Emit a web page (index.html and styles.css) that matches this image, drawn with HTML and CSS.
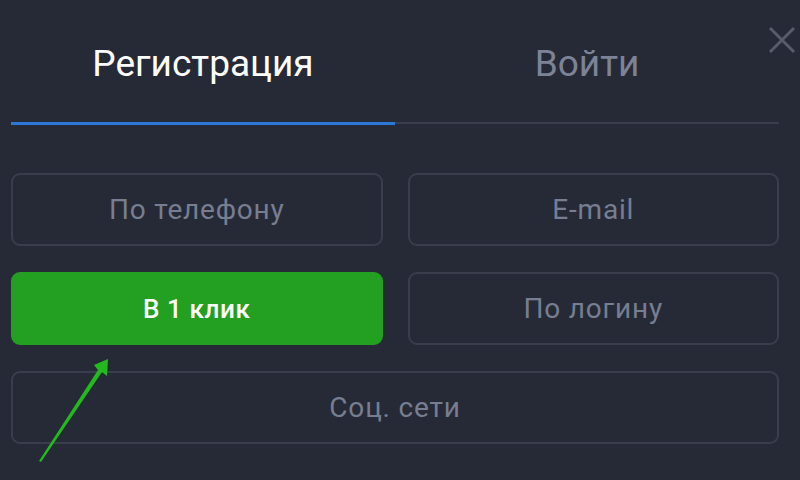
FILE: index.html
```html
<!DOCTYPE html>
<html lang="ru">
<head>
<meta charset="utf-8">
<link rel="stylesheet" href="styles.css">
</head>
<body>
<div class="modal">
  <div class="tabs">
    <div class="tab active">Регистрация</div>
    <div class="tab">Войти</div>
  </div>
  <div class="options">
    <div class="opt">По телефону</div>
    <div class="opt">E-mail</div>
    <div class="opt selected">В 1 клик</div>
    <div class="opt">По логину</div>
    <div class="opt wide">Соц. сети</div>
  </div>
  <svg class="close" width="28" height="28" viewBox="0 0 28 28">
    <path d="M2 2 L26 26 M26 2 L2 26" stroke="#575c6b" stroke-width="3" fill="none"/>
  </svg>
  <svg class="arrow" width="800" height="480" viewBox="0 0 800 480">
    <polygon points="39,461 41,462 102,372 107,376 108,359 94,365 98,370" fill="#22bb1c"/>
  </svg>
</div>
</body>
</html>
```

FILE: styles.css
```css
html, body {
  margin: 0;
  padding: 0;
  background: #262a37;
  width: 800px;
  height: 480px;
  overflow: hidden;
  font-family: Roboto, "Noto Sans", sans-serif;
}
.modal {
  position: relative;
  width: 800px;
  height: 480px;
  padding: 0 21px 0 11px;
  box-sizing: border-box;
}
.tabs {
  display: flex;
  height: 125px;
}
.tab {
  flex: 1;
  display: flex;
  align-items: center;
  justify-content: center;
  padding-top: 5px;
  box-sizing: border-box;
  font-size: 37px;
  color: #7c8397;
  border-bottom: 2px solid #393e4c;
  height: 124px;
}
.tab.active {
  color: #ffffff;
  border-bottom: 3px solid #2d78d6;
  height: 125px;
}
.options {
  margin-top: 48px;
  display: grid;
  grid-template-columns: 1fr 1fr;
  column-gap: 25px;
  row-gap: 26px;
}
.opt {
  height: 73px;
  box-sizing: border-box;
  border: 2px solid #393e4c;
  border-radius: 9px;
  display: flex;
  align-items: center;
  justify-content: center;
  font-size: 28px;
  letter-spacing: 0.8px;
  color: #777e91;
}
.opt.selected {
  background: #239f22;
  border-color: #239f22;
  color: #ffffff;
  font-size: 26px;
  letter-spacing: 0.6px;
  font-weight: 500;
}
.opt.wide {
  grid-column: 1 / 3;
}
.close {
  position: absolute;
  left: 768px;
  top: 26px;
}
.arrow {
  position: absolute;
  left: 0;
  top: 0;
  pointer-events: none;
}
```
